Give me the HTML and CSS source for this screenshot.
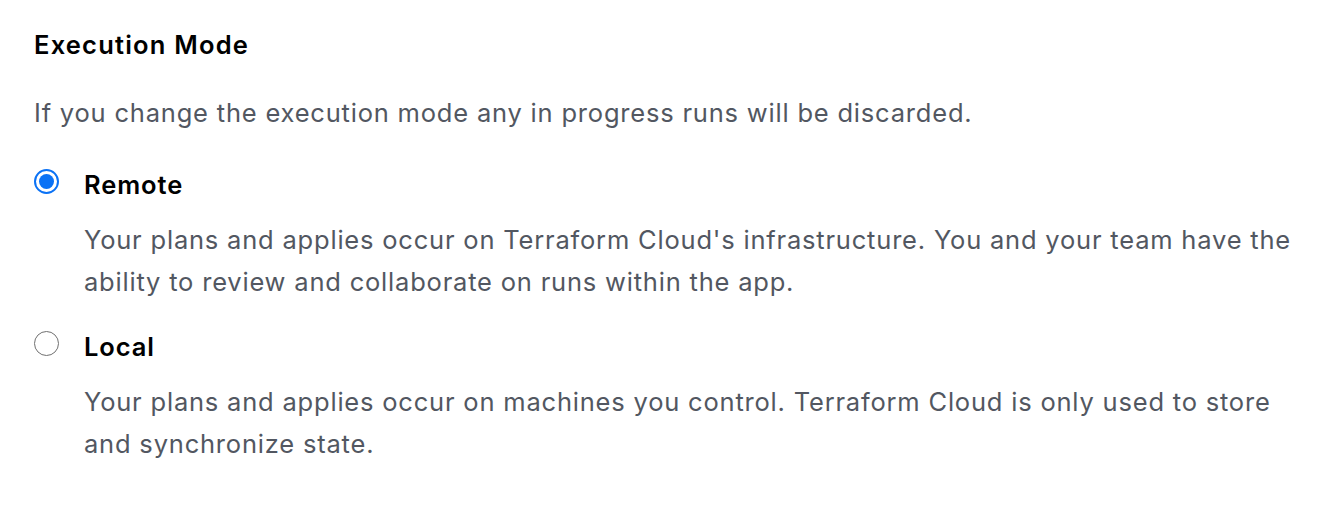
FILE: index.html
```html
<!DOCTYPE html>
<html>
<head>
<meta charset="utf-8">
<link rel="stylesheet" href="styles.css">
</head>
<body>
<section class="panel">
  <h2 class="title">Execution Mode</h2>
  <p class="intro">If you change the execution mode any in progress runs will be discarded.</p>
  <div class="options">
    <div class="option">
      <label class="option-head">
        <span class="radio radio-checked"><span class="dot"></span></span>
        <span class="option-label">Remote</span>
      </label>
      <p class="option-desc">Your plans and applies occur on Terraform Cloud's infrastructure. You and your team have the ability to review and collaborate on runs within the app.</p>
    </div>
    <div class="option">
      <label class="option-head">
        <span class="radio"></span>
        <span class="option-label">Local</span>
      </label>
      <p class="option-desc">Your plans and applies occur on machines you control. Terraform Cloud is only used to store and synchronize state.</p>
    </div>
  </div>
</section>
</body>
</html>
```

FILE: styles.css
```css
html, body {
  margin: 0;
  padding: 0;
  background: #ffffff;
}
body {
  font-family: Inter, "Noto Sans", sans-serif;
  -webkit-font-smoothing: antialiased;
}
.panel {
  padding: 24px 0 0 34px;
  width: 1266px;
}
.title {
  margin: 0;
  font-size: 25.5px;
  line-height: 42px;
  font-weight: 600;
  letter-spacing: 1.2px;
  color: #000000;
}
.intro {
  margin: 26px 0 0 0;
  font-size: 25.5px;
  line-height: 42px;
  letter-spacing: 0.8px;
  color: #525761;
}
.options {
  margin-top: 29px;
  display: flex;
  flex-direction: column;
  gap: 22px;
}
.option-head {
  display: flex;
  align-items: center;
  gap: 24px;
  height: 42px;
}
.radio {
  width: 25px;
  height: 25px;
  margin: 0 1px 5px 0;
  box-sizing: border-box;
  border-radius: 50%;
  border: 1.5px solid #707070;
  display: flex;
  align-items: center;
  justify-content: center;
  flex: none;
}
.radio-checked {
  border: 2.5px solid #0b72f5;
}
.dot {
  width: 15px;
  height: 15px;
  border-radius: 50%;
  background: #0b72f5;
}
.option-label {
  font-size: 25.5px;
  font-weight: 600;
  letter-spacing: 0.9px;
  color: #000000;
}
.option-desc {
  margin: 14px 0 0 50px;
  font-size: 25.5px;
  line-height: 42px;
  letter-spacing: 0.8px;
  color: #525761;
}
```
